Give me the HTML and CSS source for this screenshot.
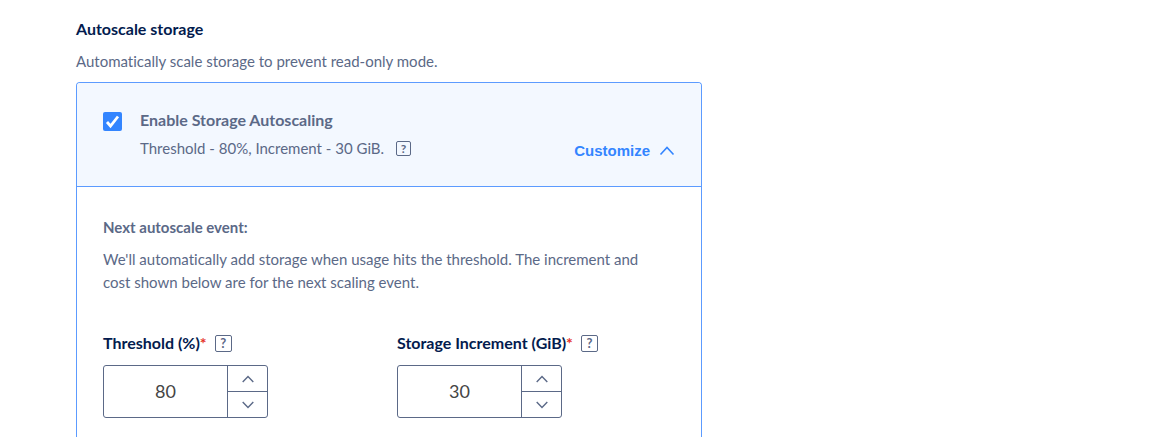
FILE: index.html
```html
<!DOCTYPE html>
<html lang="en">
<head>
    <meta charset="UTF-8">
    <meta name="viewport" content="width=device-width, initial-scale=1.0">
    <title>Autoscale storage</title>
    <link rel="stylesheet" href="styles.css">
</head>
<body>
    <section class="autoscale">
        <h2 class="title">Autoscale storage</h2>
        <p class="subtitle">Automatically scale storage to prevent read-only mode.</p>

        <div class="panel">
            <div class="panel-header">
                <input type="checkbox" id="enable" class="checkbox" checked>
                <div class="summary">
                    <label for="enable" class="summary-title">Enable Storage Autoscaling</label>
                    <div class="summary-text">
                        <span>Threshold - 80%, Increment - 30 GiB.</span>
                        <button type="button" class="help help-small" aria-label="About autoscaling">?</button>
                    </div>
                </div>
                <button type="button" class="customize">
                    Customize
                    <svg width="16" height="10" viewBox="0 0 16 10"><path d="M1.500 8.500 8 1.500l6.500 7"/></svg>
                </button>
            </div>

            <div class="panel-body">
                <h3 class="event-title">Next autoscale event:</h3>
                <p class="event-text">We'll automatically add storage when usage hits the threshold. The increment and cost shown below are for the next scaling event.</p>

                <div class="fields">
                    <div class="field">
                        <div class="field-head">
                            <label for="threshold">Threshold (%)<span class="required">*</span></label>
                            <button type="button" class="help" aria-label="About threshold">?</button>
                        </div>
                        <div class="stepper">
                            <input type="text" inputmode="numeric" id="threshold" value="80">
                            <div class="stepper-buttons">
                                <button type="button" aria-label="Increase threshold">
                                    <svg width="12" height="8" viewBox="0 0 12 8"><path d="M.7 7 6 1.500 11.300 7"/></svg>
                                </button>
                                <button type="button" aria-label="Decrease threshold">
                                    <svg width="12" height="8" viewBox="0 0 12 8"><path d="M.7 1 6 6.500 11.300 1"/></svg>
                                </button>
                            </div>
                        </div>
                    </div>
                    <div class="field">
                        <div class="field-head">
                            <label for="increment">Storage Increment (GiB)<span class="required">*</span></label>
                            <button type="button" class="help" aria-label="About storage increment">?</button>
                        </div>
                        <div class="stepper">
                            <input type="text" inputmode="numeric" id="increment" value="30">
                            <div class="stepper-buttons">
                                <button type="button" aria-label="Increase increment">
                                    <svg width="12" height="8" viewBox="0 0 12 8"><path d="M.7 7 6 1.500 11.300 7"/></svg>
                                </button>
                                <button type="button" aria-label="Decrease increment">
                                    <svg width="12" height="8" viewBox="0 0 12 8"><path d="M.7 1 6 6.500 11.300 1"/></svg>
                                </button>
                            </div>
                        </div>
                    </div>
                </div>
            </div>
        </div>
    </section>
</body>
</html>
```
FILE: styles.css
```css
* {
    box-sizing: border-box;
}

body {
    margin: 0;
    background-color: #fff;
    color: #5b6987;
    font-family: Lato, sans-serif;
    font-size: 15px;
    font-variant-ligatures: none;
    line-height: 24px;
}

h2, h3, p {
    margin: 0;
}

button {
    padding: 0;
    border: none;
    background: none;
    cursor: pointer;
}

svg {
    fill: none;
    stroke: currentColor;
}

.autoscale {
    display: flex;
    flex-direction: column;
    max-width: 778px;
    min-height: 100vh;
    padding: 17px 76px 0;
}

.title {
    margin-bottom: 8px;
    color: #031b4e;
    font-size: 16px;
}

.subtitle {
    margin-bottom: 9px;
}

.panel {
    flex: 1;
    border: 1px solid #5c9bff;
    border-bottom: none;
    border-radius: 4px 4px 0 0;
}

.panel-header {
    display: flex;
    padding: 25px 26px 26px;
    border-bottom: 1px solid #5c9bff;
    border-radius: 3px 3px 0 0;
    background-color: #f3f8ff;
}

.checkbox {
    appearance: none;
    width: 19px;
    height: 19px;
    margin: 4px 18px 0 0;
    border-radius: 2px;
    background: #3385ff url("data:image/svg+xml,%3Csvg xmlns='http://www.w3.org/2000/svg' viewBox='0 0 19 19'%3E%3Cpath d='M4 10l3.500 4L15 4.500' fill='none' stroke='white' stroke-width='2.800'/%3E%3C/svg%3E") center / 100%;
}

.summary {
    display: flex;
    flex: 1;
    flex-direction: column;
    gap: 4px;
}

.summary-title {
    font-size: 16px;
    font-weight: bold;
}

.summary-text {
    display: flex;
    align-items: center;
    gap: 12px;
}

.help {
    width: 17px;
    height: 17px;
    border: 1px solid #5b6987;
    border-radius: 2px;
    color: #5b6987;
    font: bold 13px/15px Lato, sans-serif;
}

.help-small {
    width: 15px;
    height: 15px;
    font-size: 12px;
    line-height: 13px;
}

.customize {
    display: flex;
    align-self: flex-end;
    align-items: center;
    gap: 9px;
    color: #3385ff;
    font: bold 15px/18px "Liberation Sans", Arial, sans-serif;
}

.customize svg {
    stroke-width: 1.6;
}

.panel-body {
    padding: 28px 26px 0;
}

.event-title {
    margin-bottom: 9px;
    font-size: 15px;
}

.event-text {
    margin-bottom: 37px;
    padding-right: 16px;
    line-height: 23px;
}

.fields {
    display: grid;
    grid-template-columns: 1fr 1fr;
    gap: 16px;
}

.field-head {
    display: flex;
    align-items: center;
    gap: 8px;
    margin-bottom: 10px;
    color: #031b4e;
    font-size: 16px;
    font-weight: bold;
}

.required {
    color: #e5332a;
}

.stepper {
    display: flex;
    width: 165px;
    height: 53px;
    border: 1px solid #5b6987;
    border-radius: 3px;
}

.stepper input {
    flex: 1;
    min-width: 0;
    padding: 0 0 2px;
    border: none;
    background: none;
    color: #444;
    font: 18px Lato, sans-serif;
    text-align: center;
}

.stepper-buttons {
    display: flex;
    flex-direction: column;
    width: 40px;
    border-left: 1px solid #5b6987;
}

.stepper-buttons button {
    display: flex;
    flex: 1;
    align-items: center;
    justify-content: center;
    color: #5b6987;
}

.stepper-buttons svg {
    stroke-width: 1.4;
}

.stepper-buttons button + button {
    border-top: 1px solid #5b6987;
}
```
